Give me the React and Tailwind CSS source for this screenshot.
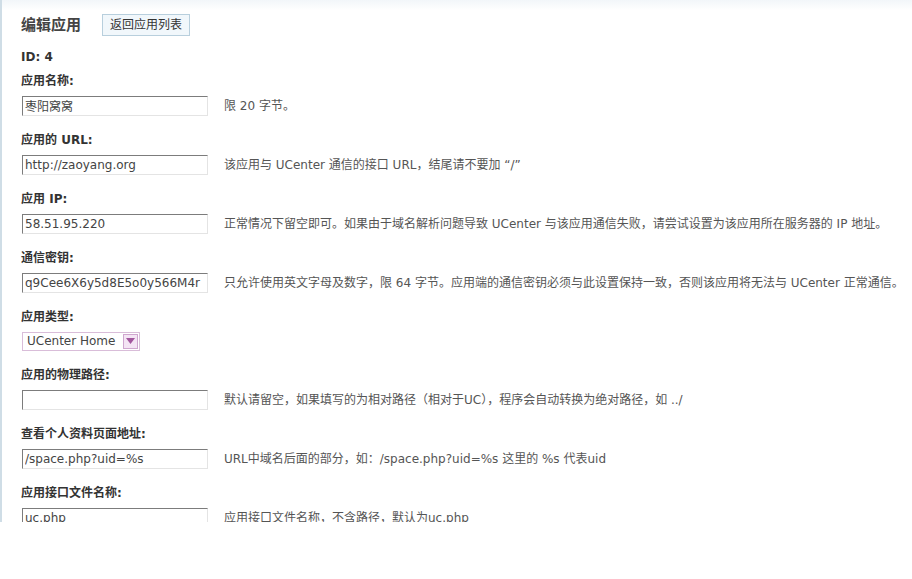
import { useState } from "react";

const font = { fontFamily: '"DejaVu Sans", "Noto Sans CJK SC", sans-serif' };

const fields = [
  { label: "应用名称:", value: "枣阳窝窝", tip: "限 20 字节。" },
  { label: "应用的 URL:", value: "http://zaoyang.org", tip: "该应用与 UCenter 通信的接口 URL，结尾请不要加 “/”" },
  {
    label: "应用 IP:",
    value: "58.51.95.220",
    tip: "正常情况下留空即可。如果由于域名解析问题导致 UCenter 与该应用通信失败，请尝试设置为该应用所在服务器的 IP 地址。",
  },
  {
    label: "通信密钥:",
    value: "q9Cee6X6y5d8E5o0y566M4r",
    tip: "只允许使用英文字母及数字，限 64 字节。应用端的通信密钥必须与此设置保持一致，否则该应用将无法与 UCenter 正常通信。",
  },
  { label: "应用类型:", select: "UCenter Home" },
  {
    label: "应用的物理路径:",
    value: "",
    tip: "默认请留空，如果填写的为相对路径（相对于UC），程序会自动转换为绝对路径，如 ../",
  },
  { label: "查看个人资料页面地址:", value: "/space.php?uid=%s", tip: "URL中域名后面的部分，如：/space.php?uid=%s 这里的 %s 代表uid" },
  { label: "应用接口文件名称:", value: "uc.php", tip: "应用接口文件名称，不含路径，默认为uc.php" },
];

function Field({ f }) {
  const [val, setVal] = useState(f.value);
  return (
    <div className="mt-[16px]">
      <div className="h-4 leading-4 text-[12px] font-bold text-[#333]">{f.label}</div>
      {f.select ? (
        <div className="mt-[7px] ml-[1px] flex h-[19px] w-[118px] items-center border border-[#d9bdd9] bg-white">
          <span className="flex-1 pl-1 text-[12px] text-[#444]">{f.select}</span>
          <span className="mr-[1px] flex h-[15px] w-[15px] items-center justify-center border border-[#cfa6cf] bg-[#f4e4f4]">
            <svg width="9" height="6" viewBox="0 0 9 6">
              <path d="M0 0h9L4.5 6z" fill="#a2569e" />
            </svg>
          </span>
        </div>
      ) : (
        <div className="mt-[7px] flex items-center">
          <input
            value={val}
            onChange={(e) => setVal(e.target.value)}
            className="ml-[1px] h-[20px] w-[186px] shrink-0 border border-t-[#7c7c7c] border-l-[#7c7c7c] border-b-[#e4e4e4] border-r-[#e4e4e4] bg-white px-[2px] text-[12px] text-[#444] outline-none"
            style={font}
          />
          <span className="ml-[16px] whitespace-nowrap text-[12px] text-[#555]">{f.tip}</span>
        </div>
      )}
    </div>
  );
}

export default function App() {
  return (
    <div className="h-[579px] w-[912px] overflow-hidden bg-white" style={font}>
      <div className="h-[522px] overflow-hidden border-l-2 border-[#cfdde6] bg-gradient-to-b from-[#f2f6f9] from-0% to-white to-[2%] pl-[19px]">
        <div className="flex items-center pt-[14px]">
          <h1 className="text-[15px] font-bold text-[#444]">编辑应用</h1>
          <button className="ml-[21px] h-[22px] border border-[#b8cfdd] bg-[#f1f7fb] px-[7px] text-[12px] text-[#333]">
            返回应用列表
          </button>
        </div>
        <div className="mt-[12px] h-4 leading-4 text-[12px] font-bold text-[#333]">ID: 4</div>
        <div className="-mt-[8px]">
          {fields.map((f) => (
            <Field key={f.label} f={f} />
          ))}
        </div>
      </div>
    </div>
  );
}
